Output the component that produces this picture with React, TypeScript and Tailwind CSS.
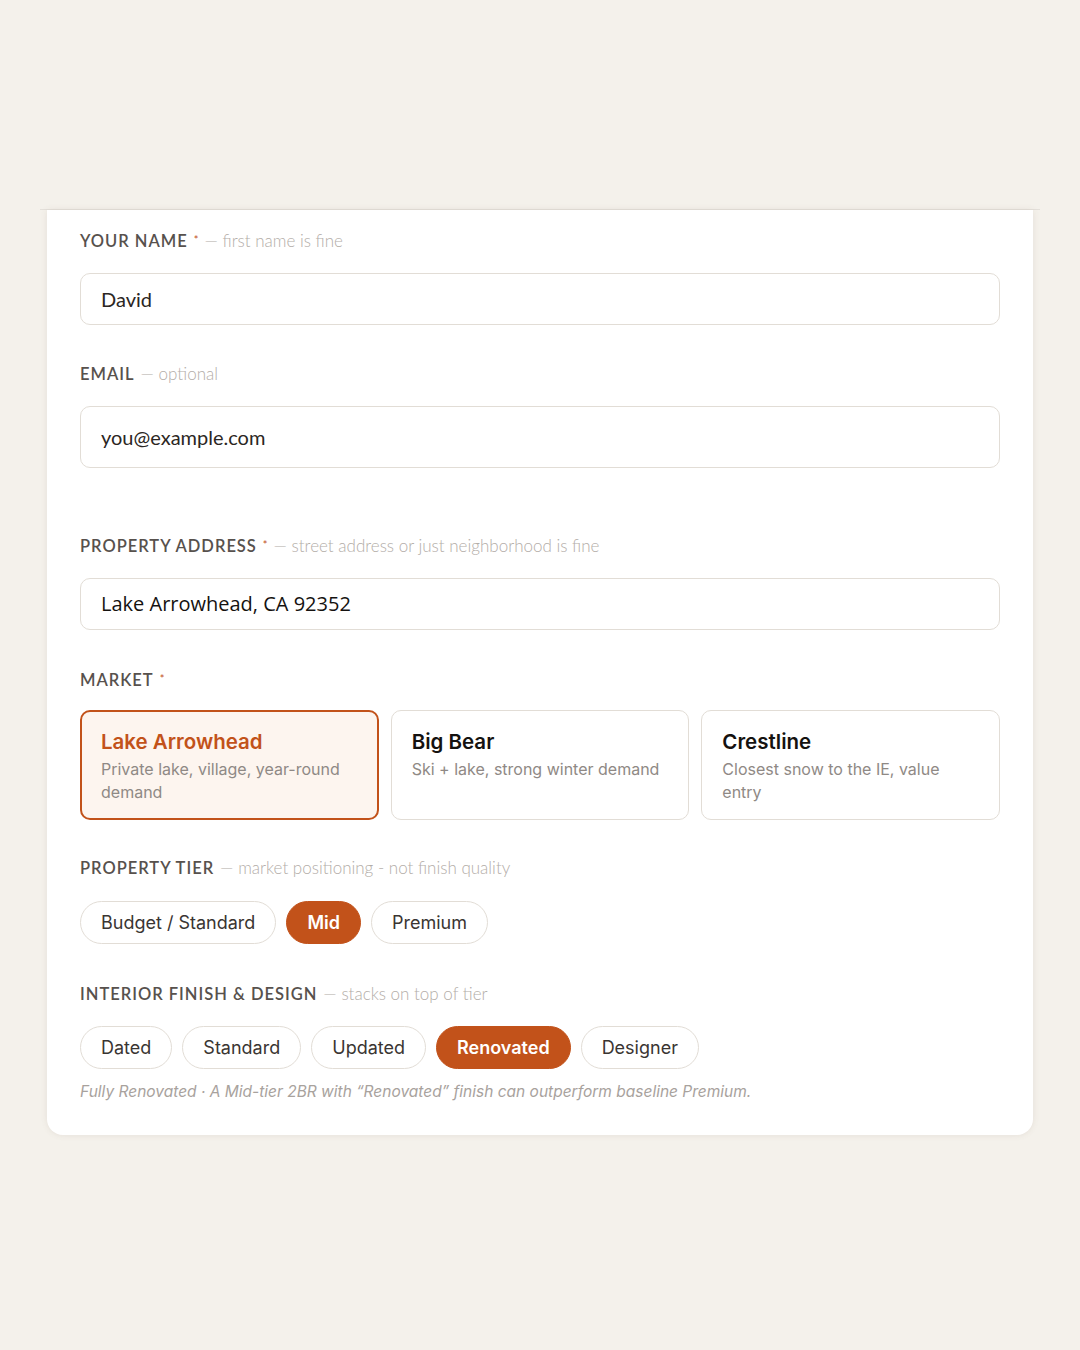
import { useState } from 'react'

const markets = [
  { name: 'Lake Arrowhead', desc: 'Private lake, village, year-round demand' },
  { name: 'Big Bear', desc: 'Ski + lake, strong winter demand' },
  { name: 'Crestline', desc: 'Closest snow to the IE, value entry' },
]

const tiers = ['Budget / Standard', 'Mid', 'Premium']
const finishes = ['Dated', 'Standard', 'Updated', 'Renovated', 'Designer']

function Label({ text, hint, required }: { text: string; hint?: string; required?: boolean }) {
  return (
    <div className="flex items-start h-6 leading-6 font-['Lato',sans-serif]">
      <span className="text-[16.5px] font-semibold tracking-[0.06em] text-[#57514d]">{text}</span>
      {required && <span className="ml-[6px] mt-[3px] text-[11px] leading-[16px] text-[#c2521a]">*</span>}
      {hint && (
        <span className="ml-[6px] text-[17px] font-light text-[#b3ada8]">— {hint}</span>
      )}
    </div>
  )
}

function Chip({ label, active, onClick }: { label: string; active: boolean; onClick: () => void }) {
  return (
    <button
      onClick={onClick}
      className={
        active
          ? "h-[43px] px-5 rounded-full bg-[#c2521a] border border-[#c2521a] text-white text-[18px] font-semibold font-['Inter',sans-serif]"
          : "h-[43px] px-5 rounded-full bg-white border border-[#e2ddd6] text-[#3a3532] text-[18px] font-['Inter',sans-serif]"
      }
    >
      {label}
    </button>
  )
}

export default function App() {
  const [market, setMarket] = useState('Lake Arrowhead')
  const [tier, setTier] = useState('Mid')
  const [finish, setFinish] = useState('Renovated')

  return (
    <div className="min-h-screen bg-[#f4f1eb] pt-[209px]">
      <div className="mx-auto w-[1000px] border-t border-[#e4e0da]">
        <div className="mx-[7px] bg-white rounded-b-2xl shadow-[0_0_6px_rgba(120,100,80,0.12)] px-[33px] pt-[19px] pb-[33px]">
          <Label text="YOUR NAME" required hint="first name is fine" />
          <div className="mt-5 h-[52px] rounded-[10px] border border-[#e2ddd6] flex items-center px-5 text-[20px] text-[#2b2623] font-['Lato',sans-serif]">
            David
          </div>

          <div className="mt-[37px]">
            <Label text="EMAIL" hint="optional" />
          </div>
          <div className="mt-5 h-[62px] rounded-[10px] border border-[#e2ddd6] flex items-center px-5 text-[20px] text-[#2b2623] font-['Lato',sans-serif]">
            you@example.com
          </div>

          <div className="mt-[66px]">
            <Label text="PROPERTY ADDRESS" required hint="street address or just neighborhood is fine" />
          </div>
          <div className="mt-5 h-[52px] rounded-[10px] border border-[#e2ddd6] flex items-center px-5 text-[20px] text-[#151210] font-['Open_Sans',sans-serif]">
            Lake Arrowhead, CA 92352
          </div>

          <div className="mt-[38px]">
            <Label text="MARKET" required />
          </div>
          {/* market cards */}
          <div className="mt-[18px] grid grid-cols-3 gap-3">
            {markets.map((m) => {
              const on = m.name === market
              return (
                <button
                  key={m.name}
                  onClick={() => setMarket(m.name)}
                  className={
                    on
                      ? 'h-[110px] flex flex-col items-start justify-start rounded-[10px] border-2 border-[#c2521a] bg-[#fdf5ef] px-[19px] pt-[16px] text-left'
                      : 'h-[110px] flex flex-col items-start justify-start rounded-[10px] border border-[#e2ddd6] bg-white px-5 pt-[17px] text-left'
                  }
                >
                  <div
                    className={
                      on
                        ? "text-[20.5px] leading-[28px] font-semibold text-[#c2521a] font-['Inter',sans-serif]"
                        : "text-[20.5px] leading-[28px] font-semibold text-[#151210] font-['Inter',sans-serif]"
                    }
                  >
                    {m.name}
                  </div>
                  <div className="mt-[2px] text-[16px] leading-[23px] text-[#8f8985] font-['Inter',sans-serif]">
                    {m.desc}
                  </div>
                </button>
              )
            })}
          </div>

          <div className="mt-[36px]">
            <Label text="PROPERTY TIER" hint="market positioning - not finish quality" />
          </div>
          <div className="mt-[21px] flex gap-[10px]">
            {tiers.map((t) => (
              <Chip key={t} label={t} active={t === tier} onClick={() => setTier(t)} />
            ))}
          </div>

          <div className="mt-[38px]">
            <Label text="INTERIOR FINISH & DESIGN" hint="stacks on top of tier" />
          </div>
          <div className="mt-[20px] flex gap-[10px]">
            {finishes.map((f) => (
              <Chip key={f} label={f} active={f === finish} onClick={() => setFinish(f)} />
            ))}
          </div>

          <p className="mt-[13px] text-[15.5px] leading-5 italic text-[#a8a29d] font-['Inter',sans-serif]">
            Fully Renovated · A Mid-tier 2BR with “Renovated” finish can outperform baseline Premium.
          </p>
        </div>
      </div>
    </div>
  )
}
